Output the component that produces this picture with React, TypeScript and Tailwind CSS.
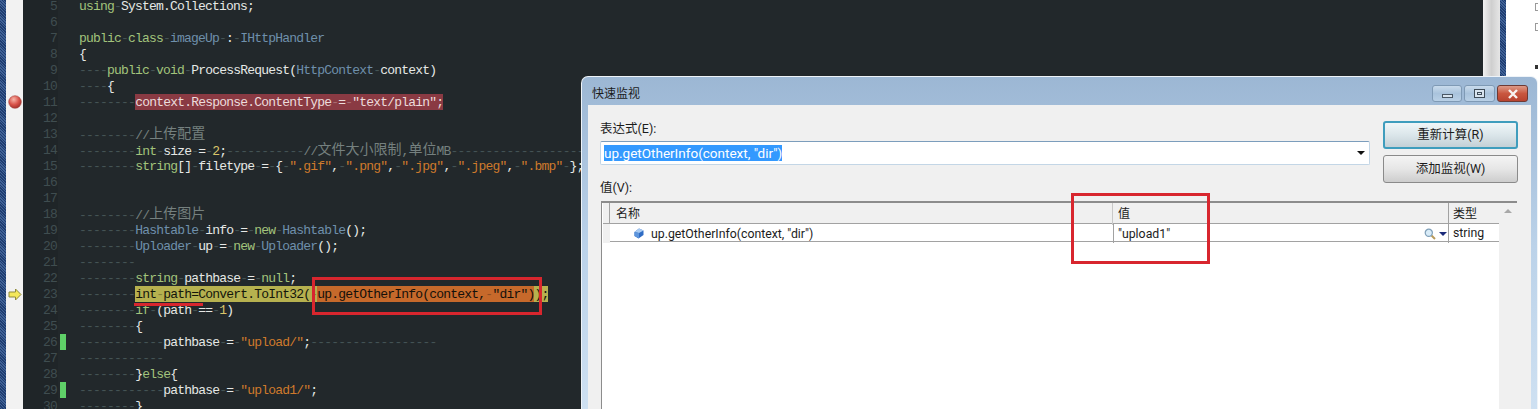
const codeLines: string[] = [
  "using System.Collections;",
  "",
  "public class imageUp : IHttpHandler",
  "{",
  "    public void ProcessRequest(HttpContext context)",
  "    {",
  '        context.Response.ContentType = "text/plain";',
  "",
  "        //上传配置",
  "        int size = 2;           //文件大小限制,单位MB                         ",
  '        string[] filetype = { ".gif", ".png", ".jpg", ".jpeg", ".bmp" };',
  "",
  "",
  "        //上传图片",
  "        Hashtable info = new Hashtable();",
  "        Uploader up = new Uploader();",
  "        ",
  "        string pathbase = null;",
  '        int path=Convert.ToInt32( up.getOtherInfo(context, "dir"));',
  "        if (path == 1)",
  "        {",
  '            pathbase = "upload/";                  ',
  "            ",
  "        }else{",
  '            pathbase = "upload1/";',
  "        }",
];

const FIRST_LINE = 5;
const KEYWORDS = ["using", "public", "class", "void", "int", "string", "new", "null", "if", "else"];
const TYPES = ["imageUp", "IHttpHandler", "HttpContext", "Hashtable", "Uploader"];
const changedLines = [26, 29];

const TOKEN_RE = /(\/\/[^ ]*|"[^"]*"|\b\w+\b| )/;

function Cjk({ text }: { text: string }) {
  return (
    <>
      {text.split(/([\u4e00-\u9fff]+)/).map((part, i) =>
        /[\u4e00-\u9fff]/.test(part) ? (
          <span key={i} className="align-[1px] font-['Noto_Sans_CJK_SC'] text-[14px] leading-3 tracking-normal">
            {part}
          </span>
        ) : (
          <span key={i}>{part}</span>
        ),
      )}
    </>
  );
}

function Code({ text, tone }: { text: string; tone?: string }) {
  return (
    <>
      {text.split(TOKEN_RE).map((tok, i) => {
        if (!tok) return null;
        // editor shows whitespace as faint dashes
        if (tok === " ") {
          return (
            <span key={i} className={tone ? `${tone} opacity-30` : "text-[#445355]"}>
              -
            </span>
          );
        }
        let color = "text-[#e6e8e6]";
        if (tok.startsWith("//")) color = "text-[#75807f]";
        else if (tok.startsWith('"')) color = "text-[#cf7a2c]";
        else if (KEYWORDS.includes(tok)) color = "text-[#a2c47c]";
        else if (TYPES.includes(tok)) color = "text-[#6f90ab]";
        else if (/^\d+$/.test(tok)) color = "text-[#d9c56a]";
        return (
          <span key={i} className={tone ?? color}>
            <Cjk text={tok} />
          </span>
        );
      })}
    </>
  );
}

function CodeLine({ text, num }: { text: string; num: number }) {
  if (num === 11) {
    return (
      <>
        <Code text="        " />
        <span className="inline-block h-4 bg-[#8a3a43]">
          <Code text={text.trim()} tone="text-[#ecdcdc]" />
        </span>
      </>
    );
  }
  if (num === 23) {
    return (
      <>
        <Code text="        " />
        <span className="inline-block h-4 bg-[#b6b14f]">
          <Code text="int path=Convert.ToInt32( " tone="text-[#14160c]" />
          <span className="inline-block h-4 bg-[#c6692b]">
            <Code text='up.getOtherInfo(context, "dir")' tone="text-[#14100a]" />
          </span>
          <Code text=");" tone="text-[#14160c]" />
        </span>
      </>
    );
  }
  return <Code text={text} />;
}

function Breakpoint() {
  return (
    <svg width="14" height="14" viewBox="0 0 14 14">
      <defs>
        <radialGradient id="bp" cx="40%" cy="30%" r="75%">
          <stop offset="0%" stopColor="#f6b4a8" />
          <stop offset="55%" stopColor="#d9534a" />
          <stop offset="100%" stopColor="#9c2c28" />
        </radialGradient>
      </defs>
      <circle cx="7" cy="7" r="6.3" fill="url(#bp)" stroke="#a8443e" strokeWidth="0.6" />
    </svg>
  );
}

function CurrentArrow() {
  return (
    <svg width="14" height="13" viewBox="0 0 14 13">
      <path d="M1 4h6.5V1L13 6.5 7.5 12V9H1z" fill="#f4e85a" stroke="#8f8a3c" strokeWidth="1" />
    </svg>
  );
}

function EditorRow({ text, num }: { text: string; num: number }) {
  return (
    <div className="flex h-4 shrink-0">
      <div className="flex w-[17px] shrink-0 items-center justify-center bg-[#f2f2f2]">
        {num === 11 && <Breakpoint />}
        {num === 23 && <CurrentArrow />}
      </div>
      <div className="w-[35px] shrink-0 bg-[#1f2528] pr-px text-right text-[#3f4d50]">{num}</div>
      <div className="w-[21px] shrink-0 pl-[2px]">
        {changedLines.includes(num) && <div className="h-full w-[6px] bg-[#5fd068]" />}
      </div>
      <div className="flex-1 whitespace-pre">
        <CodeLine text={text} num={num} />
      </div>
    </div>
  );
}

function WindowButton({ kind }: { kind: "min" | "max" | "close" }) {
  if (kind === "close") {
    return (
      <div className="flex h-[17px] w-[31px] items-center justify-center rounded-[3px] border border-[#6e3a34] bg-gradient-to-b from-[#dc9a88] via-[#c9573f] to-[#b8432f]">
        <svg width="12" height="10" viewBox="0 0 12 10">
          <path d="M2 1l8 8M10 1L2 9" stroke="#f8f4f0" strokeWidth="2.4" />
        </svg>
      </div>
    );
  }
  return (
    <div
      className={`flex h-[17px] items-center justify-center rounded-[3px] border border-[#7f9ab5] bg-gradient-to-b from-[#c9dbec] via-[#a9c3dc] to-[#b9d0e6] ${
        kind === "min" ? "w-[30px]" : "w-[31px]"
      }`}
    >
      {kind === "min" ? (
        <div className="mt-[5px] h-[4px] w-[11px] border border-[#4a5866] bg-[#d8e4ef]" />
      ) : (
        <div className="flex h-[9px] w-[11px] items-center justify-center border border-[#3f4c58] bg-[#d8e4ef]">
          <div className="h-[3px] w-[5px] border border-[#3f4c58]" />
        </div>
      )}
    </div>
  );
}

function ValueIcon() {
  return (
    <svg width="10" height="11" viewBox="0 0 10 11">
      <path d="M5 0.5L9.5 2.5V7L4.5 10.5L0.5 8V4z" fill="#2f6cc4" />
      <path d="M5 0.5L9.5 2.5L5 5L0.5 4z" fill="#a9cbf2" />
      <path d="M5 5V10.2L0.5 8V4z" fill="#5d95dc" />
    </svg>
  );
}

function Magnifier() {
  return (
    <svg width="12" height="12" viewBox="0 0 12 12">
      <path d="M7.5 7.5L11 11" stroke="#b89a5c" strokeWidth="2" />
      <circle cx="4.8" cy="4.8" r="3.6" fill="#d9ecf8" stroke="#7f9fb8" strokeWidth="1.2" />
    </svg>
  );
}

function Triangle({ className }: { className: string }) {
  return <div className={`h-0 w-0 border-x-[4px] border-t-[4px] border-x-transparent ${className}`} />;
}

function WatchDialog() {
  const uiFont = "font-['Roboto','Noto_Sans_CJK_SC',sans-serif] text-[#1c1c1c]";
  return (
    <div className="absolute left-[581px] top-[76px] flex h-[340px] w-[957px] flex-col rounded-t-[7px] border-x border-t border-[#eef3f8] bg-gradient-to-b from-[#9cb7d4] via-[#bbd2e9] to-[#cfe1f2]">
      <div className="flex h-[28px] shrink-0 items-start justify-between pl-[10px] pr-[9px] pt-[8px]">
        <span className={`${uiFont} pt-px text-[12px] leading-4`}>快速监视</span>
        <div className="flex gap-[2px]">
          <WindowButton kind="min" />
          <WindowButton kind="max" />
          <WindowButton kind="close" />
        </div>
      </div>

      <div className={`mx-[6px] flex min-h-0 flex-1 flex-col bg-[#f0f0f0] px-[12px] pt-[16px] ${uiFont}`}>
        <div className="flex gap-[13px]">
          <div className="w-[770px]">
            <div className="h-4 text-[12.5px] leading-4">表达式(E):</div>
            <div className="mt-[4px] flex h-[24px] items-center justify-between rounded-[2px] border border-[#c3d6e6] border-t-[#7c9dbc] bg-white pl-[3px] pr-[4px]">
              <span className="h-4 whitespace-pre bg-[#3399ff] text-[13.5px] leading-4 text-white">
                up.getOtherInfo(context, "dir")
              </span>
              <Triangle className="border-t-[#111]" />
            </div>
            <div className="mt-[15px] h-4 text-[12.5px] leading-4">值(V):</div>
          </div>
          <div className="flex w-[135px] flex-col gap-[6px]">
            <button className="h-[28px] rounded-[3px] border-2 border-[#3f9dbd] bg-gradient-to-b from-[#f0f6f8] via-[#dbe6ea] to-[#c4d0d6] text-[12.5px]">
              重新计算(R)
            </button>
            <button className="h-[28px] rounded-[3px] border border-[#8a8a8a] bg-gradient-to-b from-[#f4f4f4] via-[#e6e6e6] to-[#cdcdcd] text-[12.5px]">
              添加监视(W)
            </button>
          </div>
        </div>

        <div className="ml-px mt-[5px] flex min-h-0 w-[916px] flex-1 border-l border-t-2 border-[#8c8c8c] bg-white">
          <div className="ml-px flex-1">
            <div className="grid h-[21px] grid-cols-[7px_503px_336px_50px] border-b border-[#a2a2a2] bg-[#f0f0f0] text-[12px] leading-[22px]">
              <div className="border-r border-[#a2a2a2]" />
              <div className="border-r border-[#c8c8c8] pl-[6px]">名称</div>
              <div className="border-r border-[#a2a2a2] pl-[5px]">值</div>
              <div className="pl-[4px]">类型</div>
            </div>
            <div className="grid h-[18px] grid-cols-[7px_503px_336px_50px] border-b border-[#a2a2a2] text-[12.3px] leading-[17px]">
              <div className="bg-[#f0f0f0]" />
              <div className="flex items-center gap-[7px] pl-[24px]">
                <ValueIcon />
                <span className="whitespace-pre pt-[2px]">up.getOtherInfo(context, "dir")</span>
              </div>
              <div className="flex items-center justify-between border-x border-[#a2a2a2] pl-[4px] pr-px">
                <span className="pt-[2px]">"upload1"</span>
                <div className="flex items-center gap-[3px]">
                  <Magnifier />
                  <Triangle className="border-x-[3px] border-t-[#1b2a7a]" />
                </div>
              </div>
              <div className="pl-[4px] pt-px">string</div>
            </div>
          </div>
          <div className="flex w-[18px] shrink-0 justify-center bg-[#f0f0f0] pt-[6px]">
            <div className="h-0 w-0 border-x-[4px] border-b-[4px] border-x-transparent border-b-[#a8a8a8]" />
          </div>
        </div>
      </div>
    </div>
  );
}

export default function App() {
  return (
    <div className="relative flex h-[409px] w-[1538px] overflow-hidden bg-white">
      <div className="w-[6px] shrink-0 bg-[repeating-linear-gradient(45deg,#1f3d70_0px,#1f3d70_1px,#3f6196_1px,#3f6196_2px)]" />

      <div className="w-[1477px] shrink-0 overflow-hidden bg-[#22282b]">
        <div className="-mt-[2px] font-['Liberation_Mono',monospace] text-[13px] leading-[18px] tracking-[-0.8px]">
          {codeLines.map((line, i) => (
            <EditorRow key={i} text={line} num={FIRST_LINE + i} />
          ))}
        </div>
      </div>

      <div className="w-[17px] shrink-0 bg-gradient-to-r from-[#f2f2f2] via-[#cfcfcf] to-[#e6e6e6]" />
      <div className="w-[6px] shrink-0 bg-[repeating-linear-gradient(45deg,#1f3d70_0px,#1f3d70_1px,#3f6196_1px,#3f6196_2px)]" />

      <div className="flex flex-1 flex-col items-end gap-[12px] pt-[3px]">
        <div className="h-[8px] w-[3px] border-y border-l border-[#9a9a9a]" />
        <div className="h-[8px] w-[3px] border-y border-l border-[#9a9a9a]" />
        <div className="mt-[22px] h-[4px] w-[3px] bg-[#333]" />
      </div>

      <WatchDialog />

      {/* annotations drawn over the screenshot */}
      <div className="absolute left-[312px] top-[277px] h-[38px] w-[230px] border-[3px] border-[#d8262e]" />
      <div className="absolute left-[134px] top-[303px] h-[3px] w-[69px] bg-[#d8262e]" />
      <div className="absolute left-[1071px] top-[193px] h-[71px] w-[139px] border-[3px] border-[#d8262e]" />
    </div>
  );
}
